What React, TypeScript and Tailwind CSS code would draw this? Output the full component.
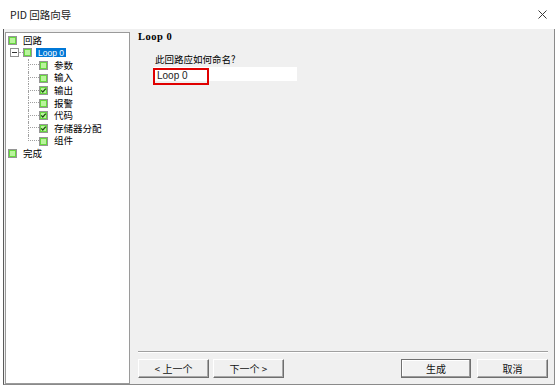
const cjk = { fontFamily: '"Noto Sans CJK SC", "Liberation Sans", sans-serif' };

function Box({ checked = false }: { checked?: boolean }) {
  return (
    <div className="relative h-[9px] w-[9px] shrink-0 border border-[#959595] bg-[#66d83e] p-[1px]">
      <div className="h-full w-full bg-[#b9f49c]" />
      {checked ? (
        <svg className="absolute left-0 top-0" width="7" height="7" viewBox="0 0 7 7">
          <path d="M1.2 3.4 L2.8 5 L5.8 1.6" fill="none" stroke="#1d4d12" strokeWidth="1.3" />
        </svg>
      ) : null}
    </div>
  );
}

const children = [
  { label: "参数", checked: false },
  { label: "输入", checked: false },
  { label: "输出", checked: true },
  { label: "报警", checked: false },
  { label: "代码", checked: true },
  { label: "存储器分配", checked: true },
  { label: "组件", checked: false },
];

function WinButton({ label, primary = false }: { label: string; primary?: boolean }) {
  return (
    <button
      className={
        primary
          ? "flex h-[19px] w-[70px] items-center justify-center border border-[#707070] bg-[#f2f2f2] text-[10px] text-[#111] shadow-[inset_-1px_-1px_0_#9a9a9a,inset_1px_1px_0_#ffffff]"
          : "flex h-[19px] w-[71px] items-center justify-center border-t border-l border-t-white border-l-white border-b border-r border-b-[#6e6e6e] border-r-[#6e6e6e] bg-[#f0f0f0] text-[10px] text-[#111] shadow-[inset_-1px_-1px_0_#a8a8a8]"
      }
      style={cjk}
    >
      {label}
    </button>
  );
}

export default function App() {
  return (
    <div className="h-[391px] w-[559px] overflow-hidden bg-white text-black" style={cjk}>
      <div className="flex h-[29px] items-center justify-between pl-[10px] pr-[12px]">
        <span className="text-[10.5px] text-[#1a1a1a]">PID 回路向导</span>
        <svg width="9" height="9" viewBox="0 0 9 9">
          <path d="M0.5 0.5 L8.5 8.5 M8.5 0.5 L0.5 8.5" stroke="#3a3a3a" strokeWidth="1" />
        </svg>
      </div>

      <div className="ml-[3px] flex h-[356px] w-[552px] border-b border-l border-r border-b-[#8a8a8a] border-l-[#5a5a5a] border-r-[#8a8a8a] bg-[#f0f0f0]">
        <div className="ml-[1px] mt-[3px] h-[352px] w-[125px] border border-[#9a9a9a] bg-white pt-[1px] text-[9.5px] leading-none">
          <div className="flex h-[12.6px] items-center pl-[2px]">
            <Box />
            <span className="ml-[6px]">回路</span>
          </div>

          <div className="flex h-[12.6px] items-center pl-[4px]">
            <div className="flex h-[9px] w-[9px] shrink-0 items-center justify-center border border-[#909090] bg-white">
              <div className="h-[1px] w-[5px] bg-[#333]" />
            </div>
            <div className="w-[4px] border-t border-dotted border-[#a0a0a0]" />
            <Box />
            <span
              className="ml-[4px] flex h-[9px] items-center bg-[#0078d7] px-[2px] text-[8.5px] text-white"
              style={{ fontFamily: '"Liberation Sans", sans-serif' }}
            >
              Loop 0
            </span>
          </div>

          {children.map((item, i) => (
            <div key={item.label} className="flex h-[12.6px] items-center pl-[22px]">
              <div className="flex h-full w-[11px] shrink-0 flex-col">
                <div className="h-1/2 border-b border-l border-dotted border-[#a0a0a0]" />
                <div
                  className={
                    i === children.length - 1
                      ? "h-1/2"
                      : "h-1/2 border-l border-dotted border-[#a0a0a0]"
                  }
                />
              </div>
              <Box checked={item.checked} />
              <span className="ml-[6px]">{item.label}</span>
            </div>
          ))}

          <div className="flex h-[12.6px] items-center pl-[2px]">
            <Box />
            <span className="ml-[6px]">完成</span>
          </div>
        </div>

        <div className="flex flex-1 flex-col pl-[8px] pr-[6px]">
          <div
            className="mt-[2px] h-[12px] text-[10.5px] font-bold leading-[12px] tracking-[0.5px]"
            style={{ fontFamily: '"Liberation Serif", serif' }}
          >
            Loop 0
          </div>
          <div className="ml-[17px] mt-[10px] h-[12px] text-[9.5px] leading-[12px]">此回路应如何命名?</div>
          <div className="relative ml-[15px] mt-[2px] h-[14px] w-[144px] bg-white">
            <span
              className="absolute left-[4px] top-[3px] text-[10px] leading-[12px] text-[#222]"
              style={{ fontFamily: '"Liberation Sans", sans-serif' }}
            >
              Loop 0
            </span>
            <div className="absolute left-0 top-[1px] h-[17px] w-[56px] border-2 border-[#e00000]" />
          </div>

          <div className="flex-1" />

          <div className="h-[2px] border-b border-t border-b-white border-t-[#a0a0a0]" />
          <div className="mb-[6px] mt-[6px] flex items-center">
            <WinButton label="< 上一个" />
            <div className="ml-[4px]">
              <WinButton label="下一个 >" />
            </div>
            <div className="flex-1" />
            <WinButton label="生成" primary />
            <div className="ml-[6px]">
              <WinButton label="取消" />
            </div>
          </div>
        </div>
      </div>
    </div>
  );
}
